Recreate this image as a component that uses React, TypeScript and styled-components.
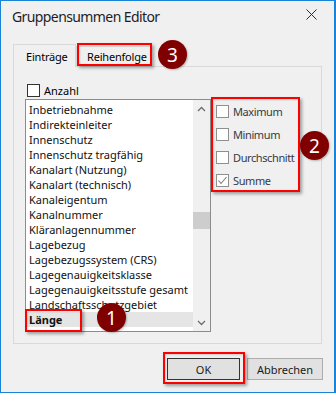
import React from "react";
import styled, { createGlobalStyle } from "styled-components";

const FONT = `"Noto Sans", "Segoe UI", sans-serif`;

const Global = createGlobalStyle`
  html, body { margin: 0; padding: 0; background: #f0f0f0; }
  *, *::before, *::after { box-sizing: border-box; }
`;

const Window = styled.div`
  position: relative;
  width: 336px;
  height: 393px;
  background: #f0f0f0;
  border: 1px solid #1883d7;
  border-right-width: 2px;
  font-family: ${FONT};
  font-size: 11px;
  color: #000;
  display: flex;
  flex-direction: column;
  overflow: hidden;
`;

const TitleBar = styled.div`
  height: 30px;
  flex: none;
  display: flex;
  align-items: center;
  justify-content: space-between;
  padding-left: 11px;
`;

const Title = styled.div`
  font-size: 14px;
  letter-spacing: -0.6px;
  color: #1e1e1e;
  padding-top: 1px;
`;

const CloseButton = styled.div`
  width: 46px;
  height: 30px;
  display: flex;
  align-items: center;
  justify-content: center;
  padding-bottom: 3px;
`;

const Body = styled.div`
  flex: 1;
  display: flex;
  flex-direction: column;
  padding: 13px 11px 0 12px;
`;

const TabStrip = styled.div`
  display: flex;
  align-items: flex-end;
  height: 22px;
  position: relative;
  z-index: 1;
`;

const Tab = styled.div<{ $active?: boolean }>`
  height: ${(p) => (p.$active ? 23 : 20)}px;
  margin-bottom: ${(p) => (p.$active ? -1 : 0)}px;
  padding: 0 ${(p) => (p.$active ? 12 : 10)}px;
  border: 1px solid #d9d9d9;
  border-bottom: ${(p) => (p.$active ? "none" : "1px solid #d9d9d9")};
  background: #f0f0f0;
  display: flex;
  align-items: ${(p) => (p.$active ? "flex-start" : "center")};
  padding-top: ${(p) => (p.$active ? 4 : 0)}px;
  width: ${(p) => (p.$active ? 63 : 76)}px;
  white-space: nowrap;
  letter-spacing: -0.2px;
`;

const Panel = styled.div`
  width: 309px;
  height: 278px;
  border: 1px solid #d9d9d9;
  padding: 17px 0 0 11px;
  display: flex;
  flex-direction: column;
`;

const CheckRow = styled.div<{ $indent?: number }>`
  display: flex;
  align-items: center;
  height: 13px;
  gap: 4px;
  margin-left: ${(p) => p.$indent ?? 0}px;
  white-space: nowrap;
`;

const Box = styled.div<{ $dark?: boolean }>`
  width: 13px;
  height: 13px;
  flex: none;
  background: #fff;
  border: 1px solid ${(p) => (p.$dark ? "#333" : "#8f8f8f")};
  display: flex;
  align-items: center;
  justify-content: center;
`;

const Label = styled.span<{ $muted?: boolean }>`
  color: ${(p) => (p.$muted ? "#363a40" : "#000")};
  letter-spacing: ${(p) => (p.$muted ? "-0.4px" : "0")};
`;

const ListArea = styled.div`
  display: flex;
  align-items: flex-start;
  margin-top: 2px;
`;

const ListBox = styled.div`
  width: 186px;
  height: 233px;
  background: #fff;
  border: 1px solid #8c8c8c;
  display: flex;
`;

const Rows = styled.div`
  flex: 1;
  padding-top: 2px;
  overflow: hidden;
`;

const Row = styled.div<{ $selected?: boolean }>`
  height: 15px;
  line-height: 15px;
  padding-left: 3px;
  white-space: nowrap;
  background: ${(p) => (p.$selected ? "#e5e5e5" : "transparent")};
  font-weight: ${(p) => (p.$selected ? 700 : 400)};
  color: #111;
`;

const ScrollBar = styled.div`
  width: 17px;
  flex: none;
  background: #f0f0f0;
  display: flex;
  flex-direction: column;
`;

const ScrollArrow = styled.div`
  height: 17px;
  flex: none;
  display: flex;
  align-items: center;
  justify-content: center;
`;

const ScrollTrack = styled.div`
  flex: 1;
`;

const Thumb = styled.div`
  margin-top: 95px;
  height: 17px;
  background: #cdcdcd;
`;

const OptionsGroup = styled.div`
  width: 89px;
  height: 95px;
  margin-top: -2px;
  padding: 8px 0 0 5px;
  display: flex;
  flex-direction: column;
  gap: 10px;
`;

const ButtonRow = styled.div`
  display: flex;
  justify-content: flex-end;
  gap: 7px;
  margin-top: 14px;
`;

const Button = styled.div<{ $default?: boolean; $w: number }>`
  width: ${(p) => p.$w}px;
  height: 22px;
  background: #e1e1e1;
  border: 1px solid ${(p) => (p.$default ? "#333" : "#adadad")};
  display: flex;
  align-items: center;
  justify-content: center;
  color: #1a1a1a;
`;

const Highlight = styled.div<{ $x: number; $y: number; $w: number; $h: number }>`
  position: absolute;
  left: ${(p) => p.$x}px;
  top: ${(p) => p.$y}px;
  width: ${(p) => p.$w}px;
  height: ${(p) => p.$h}px;
  border: 2px solid #f00;
  box-shadow: 2px 2px 3px rgba(0, 0, 0, 0.35), inset 1px 1px 2px rgba(0, 0, 0, 0.15);
  pointer-events: none;
  z-index: 5;
`;

const Badge = styled.div<{ $x: number; $y: number }>`
  position: absolute;
  left: ${(p) => p.$x}px;
  top: ${(p) => p.$y}px;
  width: 29px;
  height: 29px;
  border-radius: 50%;
  background: #800000;
  color: #fff;
  font-family: ${FONT};
  font-size: 19px;
  display: flex;
  align-items: center;
  justify-content: center;
  z-index: 6;
  box-shadow: 1px 1px 2px rgba(0, 0, 0, 0.25);
`;

const items = [
  "Inbetriebnahme",
  "Indirekteinleiter",
  "Innenschutz",
  "Innenschutz tragfähig",
  "Kanalart (Nutzung)",
  "Kanalart (technisch)",
  "Kanaleigentum",
  "Kanalnummer",
  "Kläranlagennummer",
  "Lagebezug",
  "Lagebezugssystem (CRS)",
  "Lagegenauigkeitsklasse",
  "Lagegenauigkeitsstufe gesamt",
  "Landschaftsschutzgebiet",
  "Länge",
  "Leitungsart",
];

const Chevron = ({ up }: { up?: boolean }) => (
  <svg width="9" height="6" viewBox="0 0 9 6">
    <polyline
      points={up ? "1,5 4.5,1.5 8,5" : "1,1 4.5,4.5 8,1"}
      fill="none"
      stroke="#6d6d6d"
      strokeWidth="1.3"
    />
  </svg>
);

const Check = () => (
  <svg width="11" height="11" viewBox="0 0 11 11">
    <polyline points="1.5,5.5 4,8.5 9.5,2" fill="none" stroke="#7a7a7a" strokeWidth="1.1" />
  </svg>
);

const options = [
  { label: "Maximum", checked: false },
  { label: "Minimum", checked: false },
  { label: "Durchschnitt", checked: false },
  { label: "Summe", checked: true },
];

export default function App() {
  return (
    <>
      <Global />
      <Window>
        <TitleBar>
          <Title>Gruppensummen Editor</Title>
          <CloseButton>
            <svg width="11" height="11" viewBox="0 0 11 11">
              <path d="M0.5 0.5 L10.5 10.5 M10.5 0.5 L0.5 10.5" stroke="#2b2b2b" strokeWidth="1" />
            </svg>
          </CloseButton>
        </TitleBar>
        <Body>
          <TabStrip>
            <Tab $active>Einträge</Tab>
            <Tab>Reihenfolge</Tab>
          </TabStrip>
          <Panel>
            <CheckRow $indent={2}>
              <Box $dark />
              <Label>Anzahl</Label>
            </CheckRow>
            <ListArea>
              <ListBox>
                <Rows>
                  {items.map((it) => (
                    <Row key={it} $selected={it === "Länge"}>
                      {it}
                    </Row>
                  ))}
                </Rows>
                <ScrollBar>
                  <ScrollArrow>
                    <Chevron up />
                  </ScrollArrow>
                  <ScrollTrack>
                    <Thumb />
                  </ScrollTrack>
                  <ScrollArrow>
                    <Chevron />
                  </ScrollArrow>
                </ScrollBar>
              </ListBox>
              <OptionsGroup>
                {options.map((o) => (
                  <CheckRow key={o.label}>
                    <Box>{o.checked && <Check />}</Box>
                    <Label $muted>{o.label}</Label>
                  </CheckRow>
                ))}
              </OptionsGroup>
            </ListArea>
          </Panel>
          <ButtonRow>
            <Button $default $w={73}>OK</Button>
            <Button $w={76}>Abbrechen</Button>
          </ButtonRow>
        </Body>

        <Highlight $x={76} $y={42} $w={75} $h={23} />
        <Highlight $x={210} $y={96} $w={89} $h={95} />
        <Highlight $x={24} $y={308} $w={57} $h={23} />
        <Highlight $x={162} $y={351} $w={82} $h={32} />

        <Badge $x={157} $y={39}>3</Badge>
        <Badge $x={299} $y={130}>2</Badge>
        <Badge $x={96} $y={302}>1</Badge>
      </Window>
    </>
  );
}
